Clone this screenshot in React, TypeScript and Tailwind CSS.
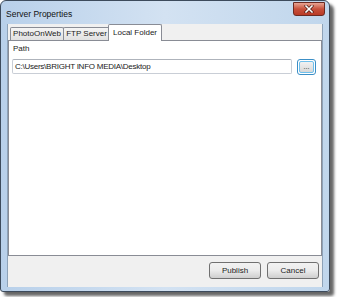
import React from "react";

// Win7-style "Server Properties" dialog, Local Folder tab active.

function CloseButton() {
  return (
    <div className="mt-[1px] w-[32px] h-[14px] rounded-b-[3px] border border-[#6b2a22] bg-gradient-to-b from-[#e8a493] via-[#c7503b] to-[#b83a26] flex items-center justify-center">
      <svg width="10" height="8" viewBox="0 0 10 8">
        <path d="M2 1 L8 7 M8 1 L2 7" stroke="#4a1a14" strokeWidth="3" strokeLinecap="square" />
        <path d="M2 1 L8 7 M8 1 L2 7" stroke="#ffffff" strokeWidth="1.6" strokeLinecap="square" />
      </svg>
    </div>
  );
}

function Tab({ label, active, width }: { label: string; active?: boolean; width: string }) {
  if (active) {
    return (
      <div
        className={`${width} h-[17px] -mb-px -ml-px z-10 border border-b-0 border-[#898c95] bg-white flex items-center justify-center text-[8px] leading-none rounded-t-[2px]`}
      >
        {label}
      </div>
    );
  }
  return (
    <div
      className={`${width} h-[13px] -mr-px border border-b-0 border-[#898c95] bg-gradient-to-b from-[#f5f5f5] to-[#e1e1e1] flex items-center justify-center text-[8px] leading-none rounded-t-[2px]`}
    >
      {label}
    </div>
  );
}

function DialogButton({ label }: { label: string }) {
  return (
    <div className="w-[52px] h-[17px] rounded-[3px] border border-[#707070] bg-gradient-to-b from-[#f2f2f2] via-[#ebebeb] to-[#cfcfcf] flex items-center justify-center text-[8px] leading-none">
      {label}
    </div>
  );
}

export default function App() {
  return (
    <div className="w-[337px] h-[297px] bg-white font-['Liberation_Sans',Arial,sans-serif] text-[#1b1b1b]">
      <div className="w-[330px] h-[292px] flex flex-col rounded-t-[6px] rounded-b-[3px] border border-[#3d4b5c] bg-gradient-to-r from-[#b8d0ea] via-[#d3e2f2] to-[#c0d6ec] shadow-[4px_4px_3px_rgba(0,0,0,0.6)]">
        {/* title bar */}
        <div className="h-[23px] flex items-start justify-between pl-[5px] pr-[4px]">
          <span className="mt-[9px] text-[8.5px] leading-none text-[#111]">Server Properties</span>
          <CloseButton />
        </div>

        {/* client area */}
        <div className="mx-[6px] flex-1 flex flex-col bg-[#f0f0f0] border-l border-r border-[#8da2b8]">
          <div className="h-[16px] flex items-end pl-[2px]">
            <Tab label="PhotoOnWeb" width="w-[54px]" />
            <Tab label="FTP Server" width="w-[47px]" />
            <Tab label="Local Folder" active width="w-[54px]" />
          </div>

          <div className="h-[216px] bg-white border border-[#898c95] pl-[4px] pr-[5px] pt-[4px]">
            <div className="text-[8px] leading-none">Path</div>
            <div className="mt-[6px] flex items-start gap-[5px]">
              <div className="-ml-px flex-1 h-[15px] rounded-[2px] border border-[#c9ced6] border-t-[#aeb3bb] flex items-center pl-[2px] text-[8px] leading-none tracking-[-0.25px]">
                C:\Users\BRIGHT INFO MEDIA\Desktop
              </div>
              <div className="w-[19px] h-[16px] rounded-[3px] border border-[#3c8fc6] p-px">
                <div className="w-full h-full rounded-[2px] border border-[#6fc0ec] bg-gradient-to-b from-[#f2f2f2] to-[#d8d8d8] flex items-center justify-center text-[7px] leading-none pb-[2px]">
                  ...
                </div>
              </div>
            </div>
          </div>

          <div className="flex-1 flex justify-end items-start gap-[6px] pt-[6px] pr-[3px]">
            <DialogButton label="Publish" />
            <DialogButton label="Cancel" />
          </div>
        </div>

        <div className="h-[4px]" />
      </div>
    </div>
  );
}
